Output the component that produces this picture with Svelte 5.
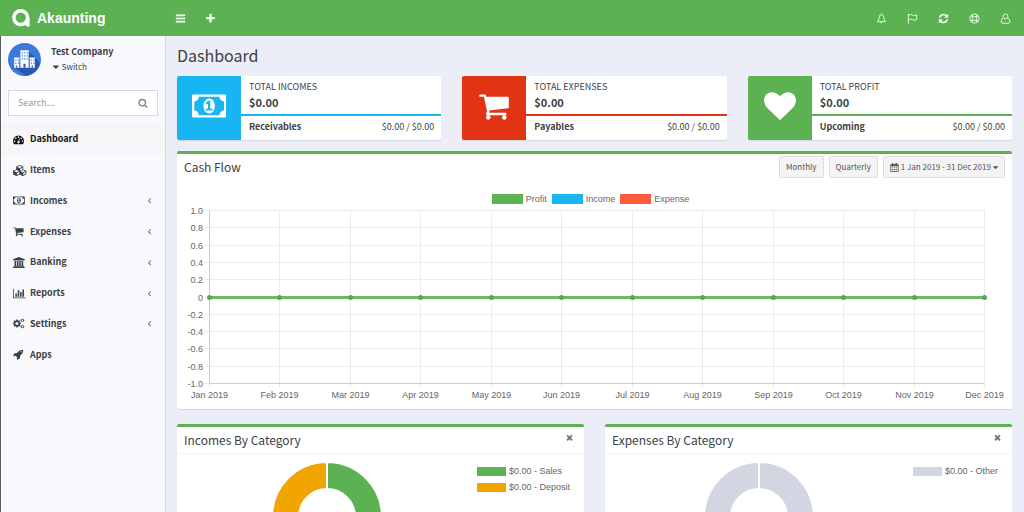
<script>
  const icons = {
    bars: { w: 1792, d: "M1664 1344v128q0 26-19 45t-45 19h-1408q-26 0-45-19t-19-45v-128q0-26 19-45t45-19h1408q26 0 45 19t19 45zm0-512v128q0 26-19 45t-45 19h-1408q-26 0-45-19t-19-45v-128q0-26 19-45t45-19h1408q26 0 45 19t19 45zm0-512v128q0 26-19 45t-45 19h-1408q-26 0-45-19t-19-45v-128q0-26 19-45t45-19h1408q26 0 45 19t19 45z" },
    plus: { w: 1792, d: "M1600 736v192q0 40-28 68t-68 28h-416v416q0 40-28 68t-68 28h-192q-40 0-68-28t-28-68v-416h-416q-40 0-68-28t-28-68v-192q0-40 28-68t68-28h416v-416q0-40 28-68t68-28h192q40 0 68 28t28 68v416h416q40 0 68 28t28 68z" },
    search: { w: 1792, d: "M1216 832q0-185-131.5-316.5t-316.5-131.5-316.5 131.5-131.5 316.5 131.5 316.5 316.5 131.5 316.5-131.5 131.5-316.5zm512 832q0 52-38 90t-90 38q-54 0-90-38l-343-342q-179 124-399 124-143 0-273.5-55.5t-225-150-150-225-55.5-273.5 55.5-273.5 150-225 225-150 273.5-55.5 273.5 55.5 225 150 150 225 55.5 273.5q0 220-124 399l343 343q37 37 37 90z" },
    dashboard: { w: 1792, d: "M384 1152q0-53-37.5-90.5t-90.5-37.5-90.5 37.5-37.5 90.5 37.5 90.5 90.5 37.5 90.5-37.5 37.5-90.5zm192-448q0-53-37.5-90.5t-90.5-37.5-90.5 37.5-37.5 90.5 37.5 90.5 90.5 37.5 90.5-37.5 37.5-90.5zm428 481l101-382q6-26-7.5-48.5t-38.5-29.5-48 6.5-30 39.5l-101 382q-60 5-107 43.5t-63 98.5q-20 77 20 146t117 89 146-20 89-117q16-60-6-117t-72-91zm660-33q0-53-37.5-90.5t-90.5-37.5-90.5 37.5-37.5 90.5 37.5 90.5 90.5 37.5 90.5-37.5 37.5-90.5zm-640-640q0-53-37.5-90.5t-90.5-37.5-90.5 37.5-37.5 90.5 37.5 90.5 90.5 37.5 90.5-37.5 37.5-90.5zm448 192q0-53-37.5-90.5t-90.5-37.5-90.5 37.5-37.5 90.5 37.5 90.5 90.5 37.5 90.5-37.5 37.5-90.5zm320 448q0 261-141 483-19 29-54 29h-1402q-35 0-54-29-141-221-141-483 0-182 71-348t191-286 286-191 348-71 348 71 286 191 191 286 71 348z" },
    cubes: { w: 2304, d: "M640 1632l384-192v-314l-384 164v342zm-64-454l404-173-404-173-404 173zm1088 454l384-192v-314l-384 164v342zm-64-454l404-173-404-173-404 173zm-448-293l384-165v-266l-384 164v267zm-64-379l441-189-441-189-441 189zm1088 518v416q0 36-19 67t-52 47l-448 224q-25 14-57 14t-57-14l-448-224q-4-2-7-4-2 2-7 4l-448 224q-25 14-57 14t-57-14l-448-224q-33-16-52-47t-19-67v-416q0-38 21.5-70t56.5-48l434-186v-400q0-38 21.5-70t56.5-48l448-192q23-10 50-10t50 10l448 192q35 16 56.5 48t21.5 70v400l434 186q36 16 57 48t21 70z" },
    money: { w: 1920, d: "M768 1152h384v-96h-128v-448h-114l-148 137 77 80q42-37 55-57h2v288h-128v96zm512-256q0 70-21 142t-59.5 134-101.5 101-138 39-138-39-101.5-101-59.5-134-21-142 21-142 59.5-134 101.5-101 138-39 138 39 101.5 101 59.5 134 21 142zm512 256v-512q-106 0-181-75t-75-181h-1152q0 106-75 181t-181 75v512q106 0 181 75t75 181h1152q0-106 75-181t181-75zm128-832v1152q0 26-19 45t-45 19h-1792q-26 0-45-19t-19-45v-1152q0-26 19-45t45-19h1792q26 0 45 19t19 45z" },
    cart: { w: 1792, d: "M704 1536q0 52-38 90t-90 38-90-38-38-90 38-90 90-38 90 38 38 90zm896 0q0 52-38 90t-90 38-90-38-38-90 38-90 90-38 90 38 38 90zm128-1088v512q0 24-16.5 42.5t-40.5 21.5l-1044 122q13 60 13 70 0 16-24 64h920q26 0 45 19t19 45-19 45-45 19h-1024q-26 0-45-19t-19-45q0-11 8-31.5t16-36 21.5-40 15.5-29.5l-177-823h-204q-26 0-45-19t-19-45 19-45 45-19h256q16 0 28.5 6.5t19.5 15.5 13 24.5 8 26 5.5 29.5 4.5 26h1201q26 0 45 19t19 45z" },
    bank: { w: 1920, d: "M960 0l960 384v128h-128q0 26-20.5 45t-48.5 19h-1526q-28 0-48.5-19t-20.5-45h-128v-128zm-704 640h256v768h128v-768h256v768h128v-768h256v768h128v-768h256v768h59q28 0 48.5 19t20.5 45v64h-1664v-64q0-26 20.5-45t48.5-19h59v-768zm1595 960q28 0 48.5 19t20.5 45v128h-1920v-128q0-26 20.5-45t48.5-19h1782z" },
    chart: { w: 2048, d: "M640 896v512h-256v-512h256zm384-512v1024h-256v-1024h256zm1024 1152v128h-2048v-1536h128v1408h1920zm-640-896v768h-256v-768h256zm384-384v1152h-256v-1152h256z" },
    cogs: { w: 1920, d: "M896 896q0-106-75-181t-181-75-181 75-75 181 75 181 181 75 181-75 75-181zm768 512q0-52-38-90t-90-38-90 38-38 90q0 53 37.5 90.5t90.5 37.5 90.5-37.5 37.5-90.5zm0-1024q0-52-38-90t-90-38-90 38-38 90q0 53 37.5 90.5t90.5 37.5 90.5-37.5 37.5-90.5zm-384 421v185q0 10-7 19.5t-16 10.5l-155 24q-11 35-32 76 34 48 90 115 7 11 7 20 0 12-7 19-23 30-82.5 89.5t-78.5 59.5q-11 0-21-7l-115-90q-37 19-77 31-11 108-23 155-7 24-30 24h-186q-11 0-20-7.5t-10-17.5l-23-153q-34-10-75-31l-118 89q-7 7-20 7-11 0-21-8-144-133-144-160 0-9 7-19 10-14 41-53t47-61q-23-44-35-82l-152-24q-10-1-17-9.5t-7-19.5v-185q0-10 7-19.5t16-10.5l155-24q11-35 32-76-34-48-90-115-7-11-7-20 0-12 7-20 22-30 82-89t79-59q11 0 21 7l115 90q34-18 77-32 11-108 23-154 7-24 30-24h186q11 0 20 7.5t10 17.5l23 153q34 10 75 31l118-89q8-7 20-7 11 0 21 8 144 133 144 160 0 8-7 19-12 16-42 54t-45 60q23 48 34 82l152 23q10 2 17 10.5t7 19.5zM1440 1130l96 80 96-80 110 60-22 120 130 30v136l-130 30 22 120-110 60-96-80-96 80-110-60 22-120-130-30v-136l130-30-22-120zM1440 106l96 80 96-80 110 60-22 120 130 30v136l-130 30 22 120-110 60-96-80-96 80-110-60 22-120-130-30v-136l130-30-22-120z" },
    rocket: { w: 1792, d: "M1440 448q0-40-28-68t-68-28-68 28-28 68 28 68 68 28 68-28 28-68zm224-288q0 249-75.5 430.5t-253.5 360.5q-81 80-195 176l-20 379q-2 16-16 26l-384 224q-7 4-16 4-12 0-23-9l-64-64q-13-14-8-32l85-276-281-281-276 85q-3 1-9 1-14 0-23-9l-64-64q-17-19-5-39l224-384q10-14 26-16l379-20q96-114 176-195 188-187 358-258t431-71q14 0 24 9.5t10 22.5z" },
    heart: { w: 1792, d: "M896 1664q-26 0-44-18l-624-602q-10-8-27.5-26t-55.5-65.5-68-97.5-53.5-121-23.5-138q0-220 127-344t351-124q62 0 126.5 21.5t120 58 95.5 68.5 76 68q36-36 76-68t95.5-68.5 120-58 126.5-21.5q224 0 351 124t127 344q0 221-229 450l-623 600q-18 18-44 18z" },
    refresh: { w: 1792, d: "M1639 1056q0 5-1 7-64 268-268 434.5t-478 166.5q-146 0-282.5-55t-243.5-157l-129 129q-19 19-45 19t-45-19-19-45v-448q0-26 19-45t45-19h448q26 0 45 19t19 45-19 45l-137 137q71 66 161 102t187 36q134 0 250-65t186-179q11-17 53-117 8-23 30-23h192q13 0 22.5 9.5t9.5 22.5zm25-800v448q0 26-19 45t-45 19h-448q-26 0-45-19t-19-45 19-45l138-138q-148-137-349-137-134 0-250 65t-186 179q-11 17-53 117-8 23-30 23h-199q-13 0-22.5-9.5t-9.5-22.5v-7q65-268 270-434.5t480-166.5q146 0 284 55.5t245 156.5l130-129q19-19 45-19t45 19 19 45z" },
    angle: { w: 1792, d: "M1203 544q0 13-10 23l-393 393 393 393q10 10 10 23t-10 23l-50 50q-10 10-23 10t-23-10l-466-466q-10-10-10-23t10-23l466-466q10-10 23-10t23 10l50 50q10 10 10 23z" },
    caret: { w: 1024, d: "M1024 704q0 26-19 45l-448 448q-19 19-45 19t-45-19l-448-448q-19-19-19-45t19-45 45-19h896q26 0 45 19t19 45z" },
    times: { w: 1408, d: "M1298 1322q0 40-28 68l-136 136q-28 28-68 28t-68-28l-294-294-294 294q-28 28-68 28t-68-28l-136-136q-28-28-28-68t28-68l294-294-294-294q-28-28-28-68t28-68l136-136q28-28 68-28t68 28l294 294 294-294q28-28 68-28t68 28l136 136q28 28 28 68t-28 68l-294 294 294 294q28 28 28 68z" },
    calendar: { w: 1792, d: "M64 384q0-128 128-128h192v-96q0-160 160-160t160 160v96h384v-96q0-160 160-160t160 160v96h192q128 0 128 128v1280q0 128-128 128h-1408q-128 0-128-128zM192 640v288h288v-288zM544 640v288h320v-288zM928 640v288h320v-288zM1312 640v288h288v-288zM192 992v320h288v-320zM544 992v320h320v-320zM928 992v320h320v-320zM1312 992v320h288v-320zM192 1376v288h288v-288zM544 1376v288h320v-288zM928 1376v288h320v-288zM1312 1376v288h288v-288z" }
  };

  const menu = [
    { label: "Dashboard", icon: "dashboard", active: true },
    { label: "Items", icon: "cubes" },
    { label: "Incomes", icon: "money", sub: true },
    { label: "Expenses", icon: "cart", sub: true },
    { label: "Banking", icon: "bank", sub: true },
    { label: "Reports", icon: "chart", sub: true },
    { label: "Settings", icon: "cogs", sub: true },
    { label: "Apps", icon: "rocket" }
  ];

  const totals = [
    { title: "TOTAL INCOMES", label: "Receivables", icon: "money", color: "blue" },
    { title: "TOTAL EXPENSES", label: "Payables", icon: "cart", color: "red" },
    { title: "TOTAL PROFIT", label: "Upcoming", icon: "heart", color: "green" }
  ];

  const months = ["Jan", "Feb", "Mar", "Apr", "May", "Jun", "Jul", "Aug", "Sep", "Oct", "Nov", "Dec"];
  const ticks = ["1.0", "0.8", "0.6", "0.4", "0.2", "0", "-0.2", "-0.4", "-0.6", "-0.8", "-1.0"];

  const donuts = [
    { title: "Incomes By Category", left: "orange", right: "green", items: [["green", "$0.00 - Sales"], ["orange", "$0.00 - Deposit"]] },
    { title: "Expenses By Category", left: "grey", right: "grey", items: [["grey", "$0.00 - Other"]] }
  ];

  // plot area of the cash flow chart
  const top = 4;
  const bottom = 177;
  const left = 32;
  let chartWidth = $state(835);
  let right = $derived(chartWidth - 28);

  const px = (i) => Math.round(left + (i * (right - left)) / 11) + 0.5;
  const py = (i) => Math.round(top + (i * (bottom - top)) / 10) + 0.5;
</script>

{#snippet icon(name)}
  <svg class="icon" viewBox="0 0 {icons[name].w} 1792" aria-hidden="true">
    <path fill-rule="evenodd" d={icons[name].d} />
  </svg>
{/snippet}

<header class="topbar">
  <a class="brand" href="#home">
    <svg class="logo" viewBox="0 0 18 18" aria-hidden="true">
      <circle cx="8.7" cy="8.6" r="6.9" />
      <path d="M15.9 8.6v8.9" />
      <path class="tail" d="M11 13.5l5 3.2" />
    </svg>
    <span>Akaunting</span>
  </a>
  <button class="bar-btn" aria-label="Toggle navigation">{@render icon("bars")}</button>
  <button class="bar-btn" aria-label="Add new">{@render icon("plus")}</button>
  <nav class="tools">
    <button class="bar-btn" aria-label="Notifications">
      <svg class="line" viewBox="0 0 12 12"><path d="M1.5 9.5q2-1.5 2-5 0-2.7 2.5-2.7t2.5 2.7q0 3.5 2 5zM5 10.3q1 1.2 2 0M6 .5v1" /></svg>
    </button>
    <button class="bar-btn" aria-label="Updates">
      <svg class="line" viewBox="0 0 12 12"><path d="M1.500 1v10.500M1.500 2.500q2.500-1.500 4.500-.2t4.700-.3v5q-2.500 1.600-4.700.3t-4.500.2" /></svg>
    </button>
    <button class="bar-btn" aria-label="Refresh">{@render icon("refresh")}</button>
    <button class="bar-btn" aria-label="Help">
      <svg class="line" viewBox="0 0 12 12">
        <circle cx="6" cy="6" r="5" /><circle cx="6" cy="6" r="2.3" />
        <path class="thick" d="M2.500 2.500l1.800 1.800M9.500 2.500l-1.800 1.800M2.500 9.500l1.800-1.800M9.500 9.500l-1.800-1.800" />
      </svg>
    </button>
    <button class="bar-btn" aria-label="Profile">
      <svg class="line" viewBox="0 0 12 12"><circle cx="6" cy="3.700" r="2.700" /><path d="M3.500 5.700q-2.200.8-2.200 3.800 0 1.700 1.700 1.700h6q1.700 0 1.700-1.700 0-3-2.200-3.800" /></svg>
    </button>
  </nav>
</header>

<div class="wrapper">
  <aside class="sidebar">
    <div class="company">
      <svg class="avatar" viewBox="0 0 32 32" aria-hidden="true">
        <circle cx="16" cy="16" r="16" fill="#3b78e0" />
        <path d="M20 8l11 11a16 16 0 0 1-13 12.900l-12-8z" fill="#2858b0" />
        <path fill="#fff" d="M12 7h8v17h-8zM6 14h5v10h-5zM21 14h5v10h-5z" />
        <path stroke="#3b78e0" stroke-width="1.2" stroke-dasharray="1.2 1.3" d="M13.200 9.500h6M13.200 12.500h6M13.200 15.500h6M7 16.500h4M7 19.500h4M22 16.500h4M22 19.500h4" />
        <path fill="#2858b0" d="M15 20h2v4h-2zM8 21.500h1v2.500h-1zM23 21.500h1v2.500h-1z" />
      </svg>
      <div>
        <strong>Test Company</strong>
        <a class="switch" href="#switch">{@render icon("caret")} Switch</a>
      </div>
    </div>
    <form class="search">
      <input type="text" placeholder="Search..." aria-label="Search" />
      <button type="button" aria-label="Search">{@render icon("search")}</button>
    </form>
    <nav class="menu">
      {#each menu as item}
        <a href="#{item.label}" class:active={item.active}>
          <span class="menu-icon">{@render icon(item.icon)}</span>
          <span>{item.label}</span>
          {#if item.sub}<span class="arrow">{@render icon("angle")}</span>{/if}
        </a>
      {/each}
    </nav>
  </aside>

  <main class="content">
    <h1>Dashboard</h1>

    <div class="totals">
      {#each totals as t}
        <section class="total {t.color}">
          <div class="total-icon">{@render icon(t.icon)}</div>
          <div class="total-body">
            <div class="total-main">
              <span>{t.title}</span>
              <strong>$0.00</strong>
            </div>
            <div class="total-foot">
              <b>{t.label}</b>
              <span>$0.00 / $0.00</span>
            </div>
          </div>
        </section>
      {/each}
    </div>

    <section class="box">
      <div class="box-header">
        <h2>Cash Flow</h2>
        <div class="filters">
          <button>Monthly</button>
          <button>Quarterly</button>
          <button class="range">{@render icon("calendar")} 1 Jan 2019 - 31 Dec 2019 {@render icon("caret")}</button>
        </div>
      </div>
      <div class="legend">
        <span><i class="swatch green"></i>Profit</span>
        <span><i class="swatch blue"></i>Income</span>
        <span><i class="swatch coral"></i>Expense</span>
      </div>
      <div class="chart" bind:clientWidth={chartWidth}>
        <svg width={chartWidth} height="203">
          {#each ticks as tick, i}
            <line class="grid" x1={left - 5} x2={right} y1={py(i)} y2={py(i)} />
            <text x={left - 6} y={py(i) + 3} text-anchor="end">{tick}</text>
          {/each}
          {#each months as month, i}
            <line class="grid" x1={px(i)} x2={px(i)} y1={top} y2={bottom + 5} />
            <text x={px(i)} y={bottom + 15} text-anchor="middle">{month} 2019</text>
          {/each}
          <path class="axis" d="M{px(0)} {top}V{py(10)}H{right}" />
          <line class="profit" x1={px(0)} x2={px(11)} y1={py(5)} y2={py(5)} />
          {#each months as month, i}
            <circle class="dot" cx={px(i)} cy={py(5)} r="2.5" />
          {/each}
        </svg>
      </div>
    </section>

    <div class="categories">
      {#each donuts as d}
        <section class="box">
          <div class="box-header lined">
            <h2>{d.title}</h2>
            <button class="close" aria-label="Close">{@render icon("times")}</button>
          </div>
          <div class="donut-row">
            <div class="donut">
              <svg viewBox="0 0 112 112">
                <path class={d.left} d="M56 1a55 55 0 0 0 0 110v-27a28 28 0 0 1 0-56z" />
                <path class={d.right} d="M56 1a55 55 0 0 1 0 110v-27a28 28 0 0 0 0-56z" />
              </svg>
            </div>
            <ul>
              {#each d.items as [color, text]}
                <li><i class="swatch {color}"></i>{text}</li>
              {/each}
            </ul>
          </div>
        </section>
      {/each}
    </div>
  </main>
</div>

<style>
  :global(html) {
    scrollbar-width: none;
  }

  :global(body) {
    background: #ebeef6;
    color: #3c3f43;
    font: 9px/14px "Noto Sans CJK SC", "Noto Sans", sans-serif;
  }

  a {
    color: inherit;
    text-decoration: none;
  }

  button {
    font: inherit;
    color: inherit;
    border: 0;
    padding: 0;
    background: none;
    cursor: pointer;
  }

  .icon {
    height: 12px;
    display: block;
    fill: currentColor;
  }

  /* top bar */
  .topbar {
    display: flex;
    align-items: center;
    height: 36px;
    background: #5cb253;
    color: #fff;
  }

  .brand {
    display: flex;
    align-items: center;
    gap: 7px;
    width: 153px;
    padding-left: 12px;
    font: bold 14px/18px "Liberation Sans", Arial, sans-serif;
  }

  .logo {
    width: 18px;
    height: 18px;
    fill: none;
    stroke: #fff;
    stroke-width: 3.5;
  }

  .logo .tail {
    stroke-width: 2;
  }

  .bar-btn {
    display: flex;
    justify-content: center;
    align-items: center;
    width: 30px;
    height: 36px;
  }

  .bar-btn .icon {
    height: 11px;
  }

  .tools {
    display: flex;
    gap: 1px;
    margin-left: auto;
    padding-right: 4px;
  }

  .line {
    width: 11px;
    height: 11px;
    fill: none;
    stroke: #e8ffe4;
  }

  .line .thick {
    stroke-width: 2;
  }

  /* sidebar */
  .wrapper {
    display: flex;
    min-height: calc(100vh - 36px);
  }

  .sidebar {
    flex: 0 0 164px;
    background: #f9f9fd;
    border-left: 1px solid #5a5a5a;
    border-right: 1px solid #d6d9e4;
  }

  .company {
    display: flex;
    gap: 10px;
    padding: 7px 7px 14px;
  }

  .company strong,
  .switch {
    display: flex;
    align-items: center;
    height: 16px;
  }

  .company strong {
    height: 17px;
  }

  .switch {
    gap: 3px;
    height: 14px;
    padding-left: 2px;
    font-size: 8px;
  }

  .switch .icon {
    height: 10px;
  }

  .avatar {
    width: 33px;
    height: 33px;
  }

  .search {
    display: flex;
    margin: 0 7px;
    height: 24px;
    background: #fff;
    border: 1px solid #d6d9e4;
  }

  .search input {
    flex: 1;
    min-width: 0;
    border: 0;
    padding: 0 9px;
    background: none;
    font: inherit;
    outline: none;
  }

  .search input::placeholder {
    color: #999;
  }

  .search button {
    width: 28px;
    display: flex;
    align-items: center;
    justify-content: center;
    color: #888;
  }

  .search .icon {
    height: 10px;
  }

  .menu {
    display: grid;
    grid-auto-rows: 1fr;
    height: 246px;
    margin-top: 8px;
  }

  .menu a {
    display: flex;
    align-items: center;
    padding: 0 11px 0 12px;
    font-weight: bold;
  }

  .menu a.active {
    background: #f6f6f8;
    color: #111;
  }

  .menu-icon {
    width: 17px;
  }

  .menu-icon .icon {
    height: 11px;
  }

  .arrow {
    margin-left: auto;
  }

  .arrow .icon {
    height: 9px;
  }

  /* content */
  .content {
    flex: 1;
    min-width: 0;
    padding: 8px 12px 8px 11px;
  }

  h1,
  h2 {
    margin: 0;
    font-weight: normal;
  }

  h1 {
    font-size: 16px;
    line-height: 22px;
    margin-bottom: 10px;
  }

  h2 {
    font-size: 12px;
    line-height: 16px;
  }

  .totals {
    display: grid;
    grid-template-columns: repeat(3, 1fr);
    gap: 21px;
    margin-bottom: 11px;
  }

  .total {
    display: flex;
    height: 64px;
    background: #fff;
    border-radius: 2px;
    box-shadow: 0 1px 1px rgba(0, 0, 0, 0.1);
    overflow: hidden;
  }

  .total-icon {
    display: flex;
    align-items: center;
    justify-content: center;
    width: 64px;
    padding-bottom: 4px;
    box-sizing: border-box;
    color: #fff;
    background: var(--tone);
  }

  .total-icon .icon {
    height: 32px;
  }

  .total-body {
    flex: 1;
  }

  .total-main {
    display: flex;
    flex-direction: column;
    height: 34px;
    padding: 4px 8px 0;
    border-bottom: 2px solid var(--tone);
  }

  .total-main strong {
    font-size: 11px;
    line-height: 16px;
  }

  .total-foot {
    display: flex;
    justify-content: space-between;
    padding: 4px 7px 4px 8px;
  }

  .box {
    background: #fff;
    border-top: 3px solid #5cb253;
    border-radius: 2px;
    box-shadow: 0 1px 1px rgba(0, 0, 0, 0.1);
    margin-bottom: 15px;
  }

  .box-header {
    display: flex;
    justify-content: space-between;
    align-items: center;
    height: 26px;
    padding: 0 7px;
  }

  .lined {
    border-bottom: 1px solid #f4f4f4;
  }

  .filters {
    display: flex;
    gap: 5px;
  }

  .filters button {
    display: flex;
    align-items: center;
    gap: 2px;
    height: 22px;
    padding: 0 6px;
    border: 1px solid #ddd;
    border-radius: 2px;
    background: #f4f4f4;
    color: #555;
    font-size: 8px;
  }

  .filters .icon {
    height: 9px;
  }

  .legend {
    display: flex;
    justify-content: center;
    gap: 5px;
    padding: 12px 8px 0 0;
    color: #666;
    font: 9px/14px "Liberation Sans", Arial, sans-serif;
  }

  .legend span,
  li {
    display: flex;
    align-items: center;
    gap: 3px;
  }

  .swatch {
    width: 31px;
    height: 10px;
    background: var(--tone);
  }

  .green {
    --tone: #5cb253;
    fill: #5cb253;
  }

  .blue {
    --tone: #17b5f1;
  }

  .red {
    --tone: #e03412;
  }

  .coral {
    --tone: #ff5c3f;
  }

  .orange {
    --tone: #f2a500;
    fill: #f2a500;
  }

  .grey {
    --tone: #d2d5e2;
    fill: #d2d5e2;
  }

  .chart svg {
    display: block;
  }

  .chart text {
    fill: #666;
    font: 9px "Liberation Sans", Arial, sans-serif;
  }

  .grid {
    stroke: #ececec;
  }

  .axis {
    fill: none;
    stroke: #ccc;
  }

  .profit {
    stroke: #6cbb64;
    stroke-width: 3;
  }

  .dot {
    fill: #55a84d;
  }

  .categories {
    display: grid;
    grid-template-columns: repeat(2, 1fr);
    gap: 21px;
  }

  .close {
    align-self: flex-start;
    padding: 6px 4px;
    color: #777;
  }

  .close .icon {
    height: 9px;
  }

  .donut-row {
    display: flex;
    padding: 7px 14px 8px 1px;
  }

  .donut {
    flex: 1;
    display: flex;
    justify-content: center;
  }

  .donut svg {
    width: 112px;
    height: 112px;
    stroke: #fff;
    stroke-width: 2;
  }

  ul {
    list-style: none;
    margin: 0;
    padding: 2px 0 0;
    color: #666;
    font: 9px/16px "Liberation Sans", Arial, sans-serif;
  }

  li .swatch {
    width: 29px;
    height: 9px;
  }
</style>
